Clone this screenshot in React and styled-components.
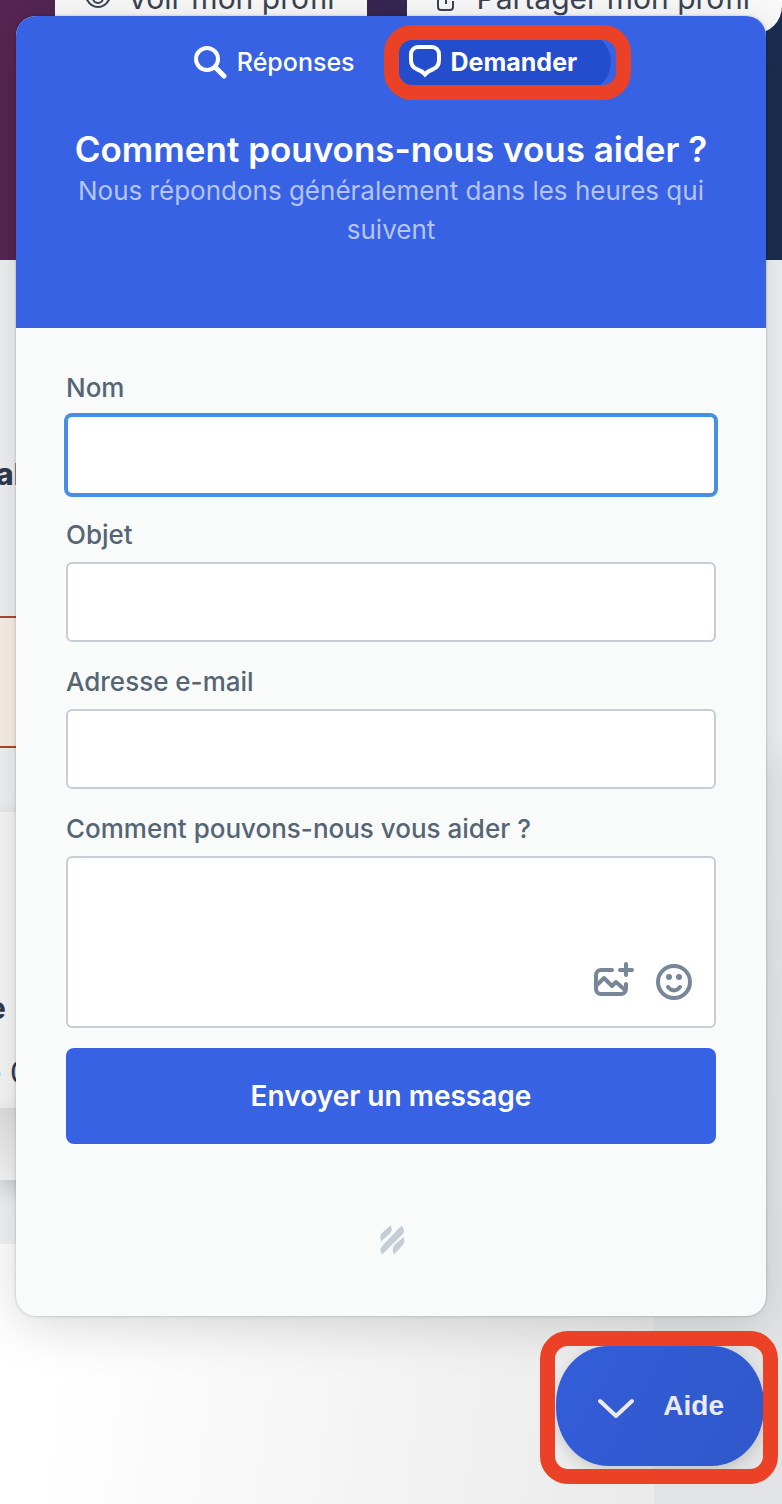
import styled, { createGlobalStyle } from "styled-components";

const GlobalStyle = createGlobalStyle`
  * {
    box-sizing: border-box;
  }
  body {
    margin: 0;
    font-family: Inter, "Liberation Sans", sans-serif;
  }
  button,
  input,
  textarea {
    font: inherit;
  }
`;

// the page and the help widget share one grid cell, the widget on top
const Screen = styled.div`
  display: grid;
  grid-template-columns: minmax(0, 1fr);
  min-height: 100vh;
  overflow: hidden;
  > * {
    grid-area: 1 / 1;
  }
`;

const Page = styled.div`
  display: flex;
  flex-direction: column;
  min-width: 0;
  color: #2f3a4f;
`;

const Hero = styled.header`
  display: flex;
  align-items: flex-start;
  justify-content: flex-end;
  gap: 40px;
  height: 260px;
  overflow: hidden;
  background: linear-gradient(90deg, #572553 0%, #362652 50%, #1b2e50 100%);
`;

const HeroButton = styled.button`
  display: flex;
  align-items: center;
  gap: 16px;
  height: 72px;
  margin-top: -38px;
  padding: 0 32px 0 30px;
  border: 0;
  border-radius: 0 0 ${props => (props.$rounded ? "28px" : "0")} 0;
  background: #fafafa;
  color: #3a4454;
  font-size: 30px;
  white-space: nowrap;
`;

const Body = styled.div`
  display: flex;
  flex: 1;
`;

const Main = styled.main`
  display: flex;
  flex-direction: column;
  flex: 1;
  overflow: hidden;
  background: #f2f3f5;
  font-size: 30px;
  line-height: 40px;
`;

const Aside = styled.aside`
  width: 128px;
  background: linear-gradient(180deg, #f2f3f5 0%, #f2f3f5 38%, #e8e9eb 42%, #e2e3e5 100%);
`;

const Heading = styled.h2`
  margin: 0;
  padding: 194px 0 122px;
  font-size: 30px;
  font-weight: 800;
  line-height: 40px;
  text-indent: -4px;
`;

const Notice = styled.div`
  height: 132px;
  border: 2px solid #b0482a;
  border-width: 2px 0;
  background: #faf1e9;
`;

const Panel = styled.section`
  margin-top: 64px;
  padding: 176px 0 16px;
  background: #f8f8f8;
  box-shadow: 0 8px 24px rgba(0, 0, 0, 0.2);
  p {
    margin: 0;
    text-indent: -16px;
  }
  strong {
    display: block;
    margin-bottom: 24px;
    text-indent: -12px;
  }
`;

const PanelFoot = styled.div`
  height: 72px;
  background: linear-gradient(180deg, #dfdfdf, #f6f6f6);
  box-shadow: 0 8px 24px rgba(0, 0, 0, 0.2);
`;

const Sheet = styled.div`
  flex: 1;
  margin-top: 64px;
  background: linear-gradient(97deg, #fff 8%, #ebebeb 95%);
`;

const Overlay = styled.div`
  display: flex;
  flex-direction: column;
  z-index: 1;
  min-width: 0;
  padding: 16px 16px 38px;
`;

const Card = styled.section`
  border-radius: 20px;
  background: #f9fbfa;
  box-shadow: 0 0 3px rgba(0, 0, 0, 0.25), 0 10px 50px rgba(0, 0, 0, 0.15);
`;

const CardHeader = styled.header`
  height: 312px;
  padding: 16px 50px;
  border-radius: 20px 20px 0 0;
  background: #3862e4;
  color: white;
  text-align: center;
  h1 {
    margin: 36px 0 0;
    font-size: 35px;
    font-weight: 600;
    line-height: 43px;
  }
  p {
    margin: 0;
    color: #b4c4f5;
    font-size: 26px;
    line-height: 39px;
  }
`;

const Tabs = styled.nav`
  display: flex;
  justify-content: center;
  gap: 12px;
  padding-left: 2px;
`;

const Tab = styled.button`
  position: relative;
  display: flex;
  align-items: center;
  gap: 10px;
  height: 60px;
  padding: 0 ${props => (props.$active ? "34px" : "22px")} 0 20px;
  border: 0;
  border-radius: 30px;
  background: ${props => (props.$active ? "#244dce" : "transparent")};
  color: white;
  font-size: 25px;
  font-weight: ${props => (props.$active ? 700 : 500)};
  cursor: pointer;
`;

const Highlight = styled.span`
  position: absolute;
  inset: ${props => props.$inset};
  border: 15px solid #ea4127;
  border-radius: 28px;
  pointer-events: none;
`;

const Form = styled.form`
  display: flex;
  flex-direction: column;
  gap: 20px;
  padding: 40px 50px 0;
`;

const Field = styled.div`
  display: flex;
  flex-direction: column;
  gap: 7px;
  label {
    color: #556575;
    font-size: 26px;
    font-weight: 450;
    line-height: 40px;
  }
`;

const Input = styled.input`
  height: 80px;
  padding: 0 20px;
  border: 2px solid ${props => (props.$current ? "#4590e6" : "#c6cdd7")};
  border-radius: 6px;
  outline: 0;
  background: white;
  box-shadow: ${props => (props.$current ? "0 0 0 2px #4590e6" : "none")};
  font-size: 26px;
`;

const MessageBox = styled.div`
  display: flex;
  flex-direction: column;
  height: 172px;
  border: 2px solid #c6cdd7;
  border-radius: 6px;
  background: white;
  textarea {
    flex: 1;
    min-height: 0;
    padding: 16px 20px;
    border: 0;
    outline: 0;
    background: transparent;
    font-size: 26px;
    resize: none;
  }
`;

const Tools = styled.div`
  display: flex;
  align-items: center;
  justify-content: flex-end;
  gap: 22px;
  padding: 0 22px 22px;
`;

const ToolButton = styled.button`
  display: flex;
  padding: 0;
  border: 0;
  background: none;
  color: #778797;
  cursor: pointer;
`;

const Submit = styled.button`
  height: 96px;
  border: 0;
  border-radius: 8px;
  background: #3862e4;
  color: white;
  font-size: 28px;
  font-weight: 600;
  cursor: pointer;
`;

const CardFooter = styled.footer`
  display: flex;
  justify-content: center;
  padding: 81px 0 61px 4px;
`;

const LauncherRow = styled.div`
  display: flex;
  justify-content: flex-end;
  padding: 30px 2px 0;
`;

const Launcher = styled.button`
  position: relative;
  display: flex;
  align-items: center;
  gap: 27px;
  height: 120px;
  padding: 0 40px;
  border: 0;
  border-radius: 52px / 58px;
  background: linear-gradient(120deg, #335dd9, #3058cb);
  box-shadow: 0 4px 14px rgba(0, 0, 0, 0.15);
  color: #e9ebee;
  font-family: "Liberation Sans", Arial, sans-serif;
  font-size: 28px;
  font-weight: 700;
  cursor: pointer;
`;

const EyeIcon = () => (
  <svg width="26" height="26" viewBox="0 0 26 26" fill="none" stroke="currentColor" strokeWidth="2">
    <path d="M1 13c3-6 7-9 12-9s9 3 12 9c-3 6-7 9-12 9S4 19 1 13z" />
    <circle cx="13" cy="13" r="5" />
  </svg>
);

const ShareIcon = () => (
  <svg width="24" height="26" viewBox="0 0 24 26" fill="none" stroke="currentColor" strokeWidth="2">
    <path d="M8 8H4a3 3 0 0 0-3 3v11a3 3 0 0 0 3 3h9a3 3 0 0 0 3-3v-6M9 19v-5c0-4 3-6 12-6M16 3l6 5-6 6" />
  </svg>
);

const SearchIcon = () => (
  <svg width="34" height="34" viewBox="0 0 34 34" fill="none" stroke="currentColor" strokeLinecap="round">
    <circle cx="14" cy="14" r="11" strokeWidth="4" />
    <path d="M22 22l9 9" strokeWidth="5" />
  </svg>
);

const BubbleIcon = () => (
  <svg width="32" height="34" viewBox="0 0 32 34" fill="none" stroke="currentColor" strokeWidth="4">
    <path d="M9 2h14a7 7 0 0 1 7 7v6c0 5-2 7.500-5.500 9-3.500 1.200-6 2.500-8.500 5.500-2.500-3-5-4.300-8.500-5.500C4 22.500 2 20 2 15V9a7 7 0 0 1 7-7z" />
  </svg>
);

const ImageIcon = () => (
  <svg
    width="40"
    height="44"
    viewBox="0 0 40 44"
    fill="none"
    stroke="currentColor"
    strokeWidth="4"
    strokeLinecap="round"
    strokeLinejoin="round"
  >
    <path d="M18 10H7a5 5 0 0 0-5 5v14a5 5 0 0 0 5 5h20a5 5 0 0 0 5-5v-5" />
    <path d="M3 25l7-7 8 8 4-4 9 8" />
    <path d="M32 4v11M26 10h12" />
  </svg>
);

const SmileIcon = () => (
  <svg width="36" height="36" viewBox="0 0 36 36" fill="none" stroke="currentColor" strokeWidth="4">
    <circle cx="18" cy="18" r="16" />
    <path d="M12 23c3 4.500 9 4.500 12 0" strokeLinecap="round" />
    <g fill="currentColor" stroke="none">
      <circle cx="13" cy="13" r="3" />
      <circle cx="23" cy="13" r="3" />
    </g>
  </svg>
);

const BrandMark = () => (
  <svg width="26" height="30" viewBox="0 0 26 30" fill="#c6cdd7">
    <path d="M1 16.500C-.5 12 .5 9.500 3 7l7.500-6.500c2 3.500 1.500 6-1 8.500z" />
    <path d="M2 29.500C-.5 25.500.5 22.500 3 20L21.500.5c3 4 3.500 6.500.5 9.500z" />
    <path d="M14 29.500c-2-4-1.500-7.500 1-10l8.500-7.500c1.500 4 1 6.500-1.500 9z" />
  </svg>
);

const ChevronIcon = () => (
  <svg
    width="40"
    height="24"
    viewBox="0 0 40 24"
    fill="none"
    stroke="currentColor"
    strokeWidth="4"
    strokeLinecap="round"
  >
    <path d="M4 7l16 15L36 7" />
  </svg>
);

const fields = [
  { id: "name", label: "Nom", type: "text", current: true },
  { id: "subject", label: "Objet", type: "text" },
  { id: "email", label: "Adresse e-mail", type: "email" }
];

const ProfilePage = () => (
  <Page>
    <Hero>
      <HeroButton>
        <EyeIcon />
        Voir mon profil
      </HeroButton>
      <HeroButton $rounded>
        <ShareIcon />
        Partager mon profil
      </HeroButton>
    </Hero>
    <Body>
      <Main>
        <Heading>al</Heading>
        <Notice />
        <Panel>
          <strong>e</strong>
          <p>e 0</p>
        </Panel>
        <PanelFoot />
        <Sheet />
      </Main>
      <Aside />
    </Body>
  </Page>
);

const ContactForm = () => (
  <Form onSubmit={e => e.preventDefault()}>
    {fields.map(field => (
      <Field key={field.id}>
        <label htmlFor={field.id}>{field.label}</label>
        <Input id={field.id} type={field.type} $current={field.current} />
      </Field>
    ))}
    <Field>
      <label htmlFor="message">Comment pouvons-nous vous aider ?</label>
      <MessageBox>
        <textarea id="message" />
        <Tools>
          <ToolButton type="button" aria-label="Ajouter une image">
            <ImageIcon />
          </ToolButton>
          <ToolButton type="button" aria-label="Ajouter un emoji">
            <SmileIcon />
          </ToolButton>
        </Tools>
      </MessageBox>
    </Field>
    <Submit type="submit">Envoyer un message</Submit>
  </Form>
);

const App = () => (
  <>
    <GlobalStyle />
    <Screen>
      <ProfilePage />
      <Overlay>
        <Card>
          <CardHeader>
            <Tabs>
              <Tab>
                <SearchIcon />
                Réponses
              </Tab>
              <Tab $active>
                <BubbleIcon />
                Demander
                <Highlight $inset="-7px -20px -8px -5px" />
              </Tab>
            </Tabs>
            <h1>Comment pouvons-nous vous aider ?</h1>
            <p>Nous répondons généralement dans les heures qui suivent</p>
          </CardHeader>
          <ContactForm />
          <CardFooter>
            <BrandMark />
          </CardFooter>
        </Card>
        <LauncherRow>
          <Launcher>
            <ChevronIcon />
            Aide
            <Highlight $inset="-15px -14px -18px -16px" />
          </Launcher>
        </LauncherRow>
      </Overlay>
    </Screen>
  </>
);

export default App;
